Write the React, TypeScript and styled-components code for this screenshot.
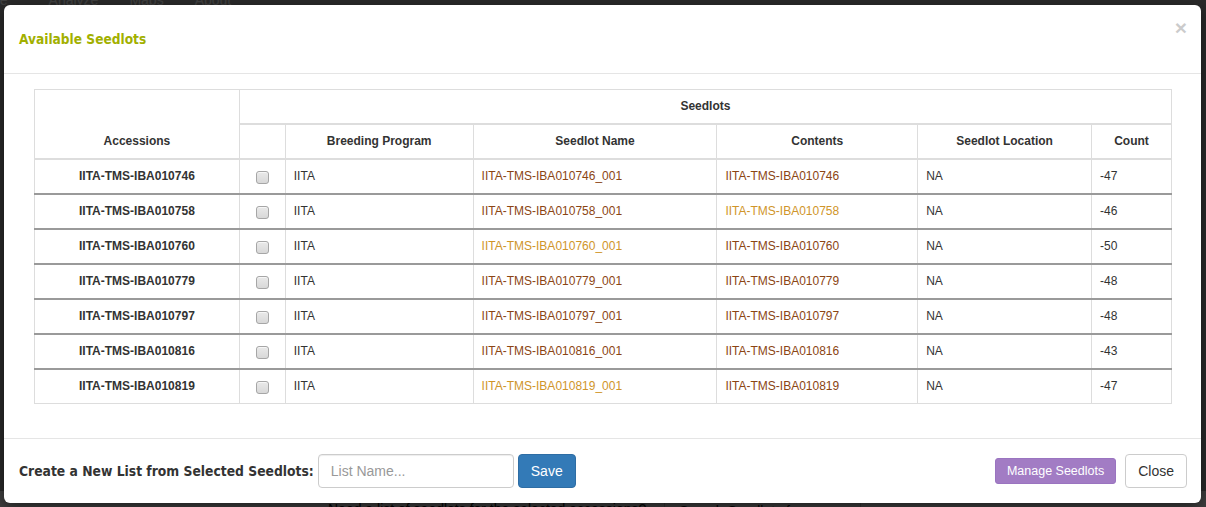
import React from 'react';
import styled, { createGlobalStyle } from 'styled-components';

const GlobalStyle = createGlobalStyle`
  html, body { margin: 0; padding: 0; }
  body {
    font-family: "Liberation Sans", Arial, sans-serif;
    font-size: 14px;
    color: #333;
    background: #a8a8a8;
  }
  * { box-sizing: border-box; }
`;

const Page = styled.div`
  position: relative;
  width: 1206px;
  height: 507px;
  overflow: hidden;
  display: flex;
  flex-direction: column;
  justify-content: space-between;
  background: #a8a8a8;
`;

const Nav = styled.nav`
  display: flex;
  gap: 31px;
  height: 20px;
  margin-top: -10px;
  margin-left: -43px;
  align-items: center;
  color: #fff;
  font-size: 14px;
`;

const NavItem = styled.span<{ $extra?: number }>`
  margin-right: ${(p) => p.$extra ?? 0}px;
`;

const BottomBar = styled.div`
  display: flex;
  align-items: flex-start;
  gap: 18px;
  height: 16px;
  padding-left: 328px;
  background: #fff;
  color: #111;
  font-size: 14px;
  line-height: 16px;
`;

const BottomText = styled.span`
  margin-top: 10px;
`;

const BottomButton = styled.span`
  margin-top: 7px;
  border: 1px solid #ccc;
  border-radius: 3px;
  padding: 4px 14px;
  width: 197px;
`;

const Overlay = styled.div`
  position: absolute;
  inset: 0;
  background: rgba(0, 0, 0, 0.75);
  padding: 5px 5px 4px 4px;
  display: flex;
`;

const Modal = styled.div`
  flex: 1;
  display: flex;
  flex-direction: column;
  background: #fff;
  border-radius: 6px;
  box-shadow: 0 5px 15px rgba(0, 0, 0, 0.5);
  overflow: hidden;
`;

const Header = styled.div`
  height: 69px;
  border-bottom: 1px solid #e5e5e5;
  display: flex;
  justify-content: space-between;
  align-items: flex-start;
  padding: 13px 14px 0 15px;
`;

const Title = styled.h4`
  margin: 11px 0 0;
  font-family: "DejaVu Sans", Verdana, sans-serif;
  font-stretch: condensed;
  font-size: 13.6px;
  line-height: 20px;
  font-weight: bold;
  color: #a2b000;
`;

const CloseX = styled.button`
  border: 0;
  background: transparent;
  padding: 0;
  font-family: "Liberation Sans", Arial, sans-serif;
  font-size: 21px;
  font-weight: bold;
  line-height: 20px;
  color: #000;
  opacity: 0.2;
  cursor: pointer;
`;

const Body = styled.div`
  flex: 1;
  padding: 15px 29px 15px 30px;
`;

const Table = styled.table`
  width: 1138px;
  border-collapse: collapse;
  font-size: 12px;
  line-height: 17px;
  border: 1px solid #ddd;
`;

const Th = styled.th<{ $bottom?: boolean }>`
  padding: 8px;
  font-weight: bold;
  text-align: center;
  vertical-align: ${(p) => (p.$bottom ? 'bottom' : 'middle')};
  border: 1px solid #ddd;
  border-bottom: 2px solid #ddd;
  color: #333;
`;

const Tr = styled.tr`
  & + & td {
    border-top: 2px solid #9a9a9a;
  }
`;

const Td = styled.td<{ $align?: string; $bold?: boolean }>`
  padding: 8px;
  border-left: 1px solid #ddd;
  border-right: 1px solid #ddd;
  text-align: ${(p) => p.$align ?? 'left'};
  font-weight: ${(p) => (p.$bold ? 'bold' : 'normal')};
  vertical-align: middle;
  color: #333;
  height: 33px;
`;

const Link = styled.a<{ $visited?: boolean }>`
  color: ${(p) => (p.$visited ? '#d0952a' : '#8b4513')};
  text-decoration: none;
`;

const Check = styled.input`
  appearance: none;
  -webkit-appearance: none;
  display: inline-block;
  margin: 2px 0 0;
  width: 13px;
  height: 13px;
  vertical-align: middle;
  border: 1px solid #a6a6a6;
  border-radius: 3px;
  background: linear-gradient(#e9e9e9, #d8d8d8);
  box-shadow: inset 0 1px 0 rgba(255, 255, 255, 0.6);
`;

const Footer = styled.div`
  border-top: 1px solid #e5e5e5;
  padding: 15px 14px 15px 15px;
  display: flex;
  justify-content: space-between;
  align-items: center;
`;

const ListForm = styled.div`
  display: flex;
  align-items: center;
  gap: 4px;
`;

const Label = styled.label`
  font-family: "DejaVu Sans", Verdana, sans-serif;
  font-stretch: condensed;
  font-size: 13.75px;
  font-weight: bold;
  color: #333;
`;

const Input = styled.input`
  width: 196px;
  height: 34px;
  padding: 6px 12px;
  font-family: "Liberation Sans", Arial, sans-serif;
  font-size: 14px;
  border: 1px solid #ccc;
  border-radius: 4px;
  box-shadow: inset 0 1px 1px rgba(0, 0, 0, 0.075);
  color: #555;
  &::placeholder { color: #999; }
`;

const Button = styled.button<{ $variant: 'primary' | 'purple' | 'default'; $small?: boolean }>`
  font-family: "Liberation Sans", Arial, sans-serif;
  font-size: ${(p) => (p.$small ? 12.5 : 14)}px;
  height: ${(p) => (p.$small ? 26 : 34)}px;
  padding: 0 ${(p) => (p.$small ? 11 : 12)}px;
  border-radius: ${(p) => (p.$small ? 3 : 4)}px;
  border: 1px solid
    ${(p) => (p.$variant === 'primary' ? '#2e6da4' : p.$variant === 'purple' ? '#9a74c0' : '#ccc')};
  background: ${(p) =>
    p.$variant === 'primary' ? '#337ab7' : p.$variant === 'purple' ? '#a27cc4' : '#fff'};
  color: ${(p) => (p.$variant === 'default' ? '#333' : '#fff')};
  cursor: pointer;
`;

const Actions = styled.div`
  display: flex;
  align-items: center;
  gap: 9px;
`;

type Row = {
  id: string;
  count: number;
  nameVisited?: boolean;
  contentsVisited?: boolean;
};

const rows: Row[] = [
  { id: '010746', count: -47 },
  { id: '010758', count: -46, contentsVisited: true },
  { id: '010760', count: -50, nameVisited: true },
  { id: '010779', count: -48 },
  { id: '010797', count: -48 },
  { id: '010816', count: -43 },
  { id: '010819', count: -47, nameVisited: true },
];

const widths = [205, 46, 188, 244, 201, 174, 80];

export default function App() {
  return (
    <>
      <GlobalStyle />
      <Page>
        <Nav>
          <NavItem $extra={10}>Manage</NavItem>
          <NavItem>Analyze</NavItem>
          <NavItem>Maps</NavItem>
          <NavItem>About</NavItem>
        </Nav>
        <BottomBar>
          <BottomText>Need a list of seedlots for the selected accessions?</BottomText>
          <BottomButton>Search Seedlots for Accessions</BottomButton>
        </BottomBar>
        <Overlay>
          <Modal>
            <Header>
              <Title>Available Seedlots</Title>
              <CloseX aria-label="Close">×</CloseX>
            </Header>
            <Body>
              <Table>
                <colgroup>
                  {widths.map((w, i) => (
                    <col key={i} style={{ width: w }} />
                  ))}
                </colgroup>
                <thead>
                  <tr>
                    <Th rowSpan={2} $bottom>
                      Accessions
                    </Th>
                    <Th colSpan={6}>Seedlots</Th>
                  </tr>
                  <tr>
                    <Th></Th>
                    <Th>Breeding Program</Th>
                    <Th>Seedlot Name</Th>
                    <Th>Contents</Th>
                    <Th>Seedlot Location</Th>
                    <Th>Count</Th>
                  </tr>
                </thead>
                <tbody>
                  {rows.map((r) => (
                    <Tr key={r.id}>
                      <Td $align="center" $bold>
                        IITA-TMS-IBA{r.id}
                      </Td>
                      <Td $align="center">
                        <Check type="checkbox" />
                      </Td>
                      <Td>IITA</Td>
                      <Td>
                        <Link href="#" $visited={r.nameVisited}>
                          IITA-TMS-IBA{r.id}_001
                        </Link>
                      </Td>
                      <Td>
                        <Link href="#" $visited={r.contentsVisited}>
                          IITA-TMS-IBA{r.id}
                        </Link>
                      </Td>
                      <Td>NA</Td>
                      <Td>{r.count}</Td>
                    </Tr>
                  ))}
                </tbody>
              </Table>
            </Body>
            <Footer>
              <ListForm>
                <Label>Create a New List from Selected Seedlots:</Label>
                <Input placeholder="List Name..." />
                <Button $variant="primary">Save</Button>
              </ListForm>
              <Actions>
                <Button $variant="purple" $small>
                  Manage Seedlots
                </Button>
                <Button $variant="default">Close</Button>
              </Actions>
            </Footer>
          </Modal>
        </Overlay>
      </Page>
    </>
  );
}
